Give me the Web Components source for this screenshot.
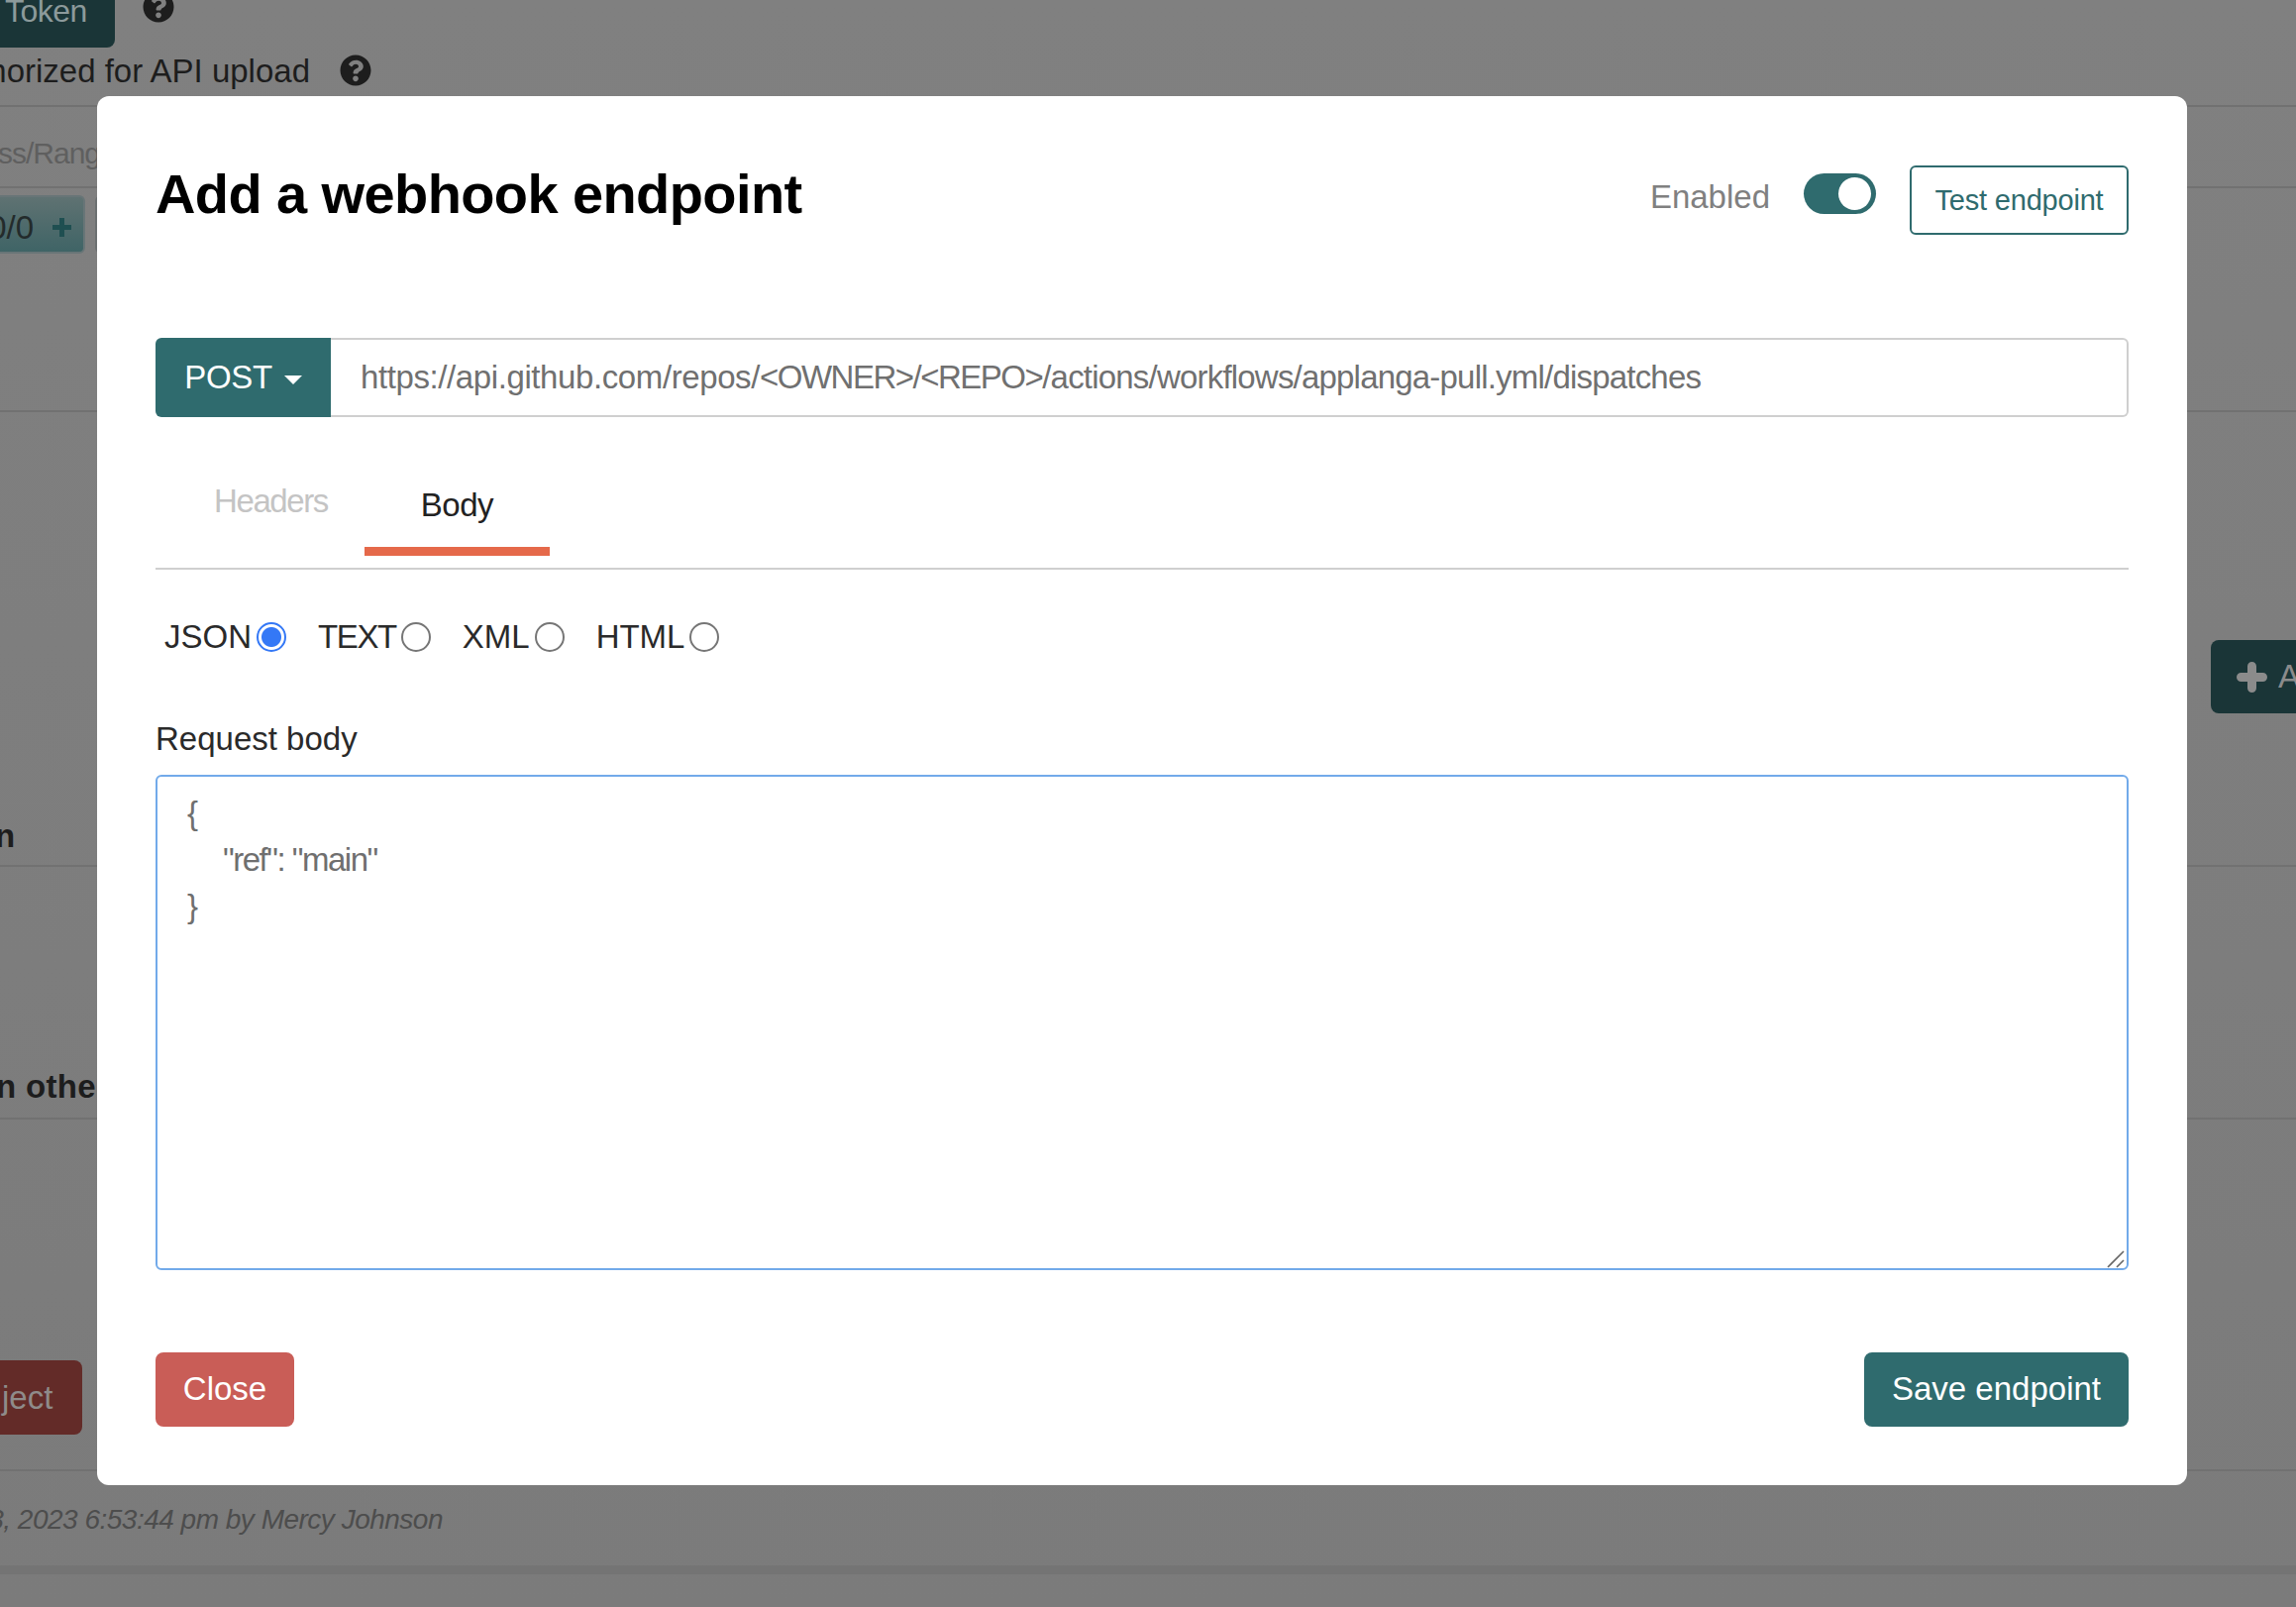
<!doctype html>
<html>
<head>
<meta charset="utf-8">
<style>
  html, body { margin: 0; height: 100%; overflow: hidden; }
  body { font-family: "Liberation Sans", Arial, sans-serif; background: #808080; }
</style>
</head>
<body>
<back-page></back-page>
<webhook-modal>
  <modal-head slot="head"></modal-head>
  <url-bar slot="url" method="POST" url="https://api.github.com/repos/<OWNER>/<REPO>/actions/workflows/applanga-pull.yml/dispatches"></url-bar>
  <tab-strip slot="tabs"></tab-strip>
  <format-radios slot="formats"></format-radios>
  <body-field slot="field"></body-field>
  <action-btn slot="close" kind="close" label="Close"></action-btn>
  <action-btn slot="save" kind="save" label="Save endpoint"></action-btn>
</webhook-modal>

<script>
const helpIcon = `<svg viewBox="0 0 512 512" width="100%" height="100%"><path fill="#1d1d1d" d="M504 256c0 137-111 248-248 248S8 393 8 256 119 8 256 8s248 111 248 248zM263 90c-54 0-89 23-116 63-4 5-3 12 3 16l35 26c5 4 13 3 17-2 18-23 30-36 57-36 20 0 45 13 45 33 0 15-12 23-33 34-23 13-54 30-54 71v6c0 7 5 12 12 12h56c7 0 12-5 12-12v-2c0-29 84-30 84-108 0-58-60-101-118-101zm-7 252c-25 0-46 21-46 46s21 46 46 46 46-21 46-46-21-46-46-46z"/></svg>`;

class BackPage extends HTMLElement {
  constructor() {
    super();
    this.attachShadow({mode: "open"}).innerHTML = `
    <style>
      :host { display: block; height: 1622px; overflow: hidden; color: #1d1d1d; font-size: 33px; background: linear-gradient(#808080, #7b7b7b); }
      .row { display: flex; border-bottom: 2px solid #717171; box-sizing: border-box; overflow: hidden; white-space: nowrap; }
      .r1 { height: 108px; display: block; }
      .tokenline { display: flex; height: 48px; gap: 28px; }
      .token { width: 116px; height: 48px; background: #1a3537; color: #8c9a9b; border-radius: 0 0 8px 0; box-sizing: border-box; padding: 0 0 19px 5px; font-size: 32px; letter-spacing: -0.5px; display: flex; align-items: flex-end; line-height: 36px; }
      .q1 { width: 32px; height: 32px; margin-top: -9px; }
      .authline { display: flex; align-items: center; justify-content: flex-end; width: 375px; height: 48px; gap: 30px; margin-top: -1px; }
      .authline span { margin-top: 2px; }
      .q2 { width: 32px; height: 32px; flex: none; }
      .r2 { height: 82px; color: #5f5f5f; padding-top: 30px; font-size: 30px; letter-spacing: -1px; }
      .r2 span { margin-left: -2px; }
      .r3 { height: 226px; padding-top: 7px; gap: 10px; }
      .count { margin-left: -8px; width: 94px; height: 59px; box-sizing: border-box; border: 2px solid #687577; border-radius: 6px; background: linear-gradient(#5f7272, #3f6466); color: #232b2b; display: flex; align-items: center; justify-content: flex-end; gap: 19px; padding: 6px 12px 0 0; flex: none; }
      .count svg { width: 19px; height: 19px; flex: none; }
      .count2 { width: 60px; height: 59px; box-sizing: border-box; border: 2px solid #6c7071; border-radius: 6px; background: #7a7e7e; flex: none; }
      .r4 { height: 459px; align-items: flex-end; padding-bottom: 10px; font-weight: bold; }
      .r4 span { margin-left: -5px; }
      .r5 { height: 255px; align-items: flex-end; padding-bottom: 12px; font-weight: bold; letter-spacing: 0.3px; }
      .r5 span { margin-left: -4px; }
      .r6 { height: 355px; padding-top: 243px; }
      .reject { width: 83px; height: 75px; box-sizing: border-box; padding-left: 2px; background: #632b28; color: #8f8b8a; border-radius: 0 8px 8px 0; display: flex; align-items: center; }
      .foot { height: 95px; width: 447px; color: #4d4d4d; font-style: italic; font-size: 28px; letter-spacing: -0.5px; display: flex; justify-content: flex-end; padding-top: 33px; box-sizing: border-box; white-space: nowrap; }
      .band { height: 9px; background: #747474; }
      .add { position: absolute; left: 2232px; top: 646px; width: 110px; height: 74px; background: #1a3537; color: #8b8b8b; border-radius: 8px; display: flex; align-items: center; gap: 11px; padding-left: 26px; box-sizing: border-box; }
      .add svg { width: 31px; height: 31px; flex: none; }
    </style>
    <div class="row r1">
      <div class="tokenline"><div class="token"><span>Token</span></div><div class="q1">${helpIcon}</div></div>
      <div class="authline"><span>horized for API upload</span><div class="q2">${helpIcon}</div></div>
    </div>
    <div class="row r2"><span>ss/Rang</span></div>
    <div class="row r3"><div class="count"><span>0/0</span><svg viewBox="0 0 19 19"><path stroke="#1f4f51" stroke-width="5" d="M9.5 0v19M0 9.5h19"/></svg></div><div class="count2"></div></div>
    <div class="row r4"><span>n</span></div>
    <div class="row r5"><span>n other</span></div>
    <div class="row r6"><div class="reject"><span>ject</span></div></div>
    <div class="foot"><span>3, 2023 6:53:44 pm by Mercy Johnson</span></div>
    <div class="band"></div>
    <div class="add"><svg viewBox="0 0 31 31"><path stroke="#8b8b8b" stroke-width="9" stroke-linecap="round" d="M15.5 4.5v22M4.5 15.5h22"/></svg><span>A</span></div>`;
  }
}

class WebhookModal extends HTMLElement {
  constructor() {
    super();
    this.attachShadow({mode: "open"}).innerHTML = `
    <style>
      :host { position: fixed; left: 98px; top: 97px; width: 2110px; height: 1402px; box-sizing: border-box; background: #fff; border-radius: 12px; padding: 70px 59px 59px; display: flex; flex-direction: column; }
      .foot { margin-top: auto; display: flex; justify-content: space-between; }
    </style>
    <slot name="head"></slot>
    <slot name="url"></slot>
    <slot name="tabs"></slot>
    <slot name="formats"></slot>
    <slot name="field"></slot>
    <div class="foot"><slot name="close"></slot><slot name="save"></slot></div>`;
  }
}

class ModalHead extends HTMLElement {
  constructor() {
    super();
    this.attachShadow({mode: "open"}).innerHTML = `
    <style>
      :host { display: flex; align-items: flex-start; height: 174px; }
      h1 { margin: -3px 0 0; font-size: 56px; line-height: 64px; font-weight: bold; color: #000; letter-spacing: -0.6px; flex: 1; white-space: nowrap; }
      .en { color: #808080; font-size: 33px; line-height: 38px; margin-top: 13px; }
      .toggle { width: 73px; height: 41px; border-radius: 21px; background: #2f6b6e; margin: 8px 34px 0 34px; padding: 4px 5px; box-sizing: border-box; display: flex; justify-content: flex-end; }
      .toggle i { display: block; width: 33px; height: 33px; border-radius: 50%; background: #fff; }
      .test { width: 221px; height: 70px; box-sizing: border-box; border: 2px solid #2f6b6e; border-radius: 6px; background: #fff; color: #2f6b6e; font: 29px "Liberation Sans", Arial, sans-serif; letter-spacing: -0.2px; padding: 0; }
    </style>
    <h1>Add a webhook endpoint</h1>
    <span class="en">Enabled</span>
    <div class="toggle"><i></i></div>
    <button class="test">Test endpoint</button>`;
  }
}

class UrlBar extends HTMLElement {
  constructor() {
    super();
    this.attachShadow({mode: "open"}).innerHTML = `
    <style>
      :host { display: flex; height: 80px; }
      .method { width: 177px; box-sizing: border-box; background: #2f6b6e; color: #fff; border-radius: 6px 0 0 6px; display: flex; align-items: center; justify-content: center; gap: 12px; font-size: 33px; letter-spacing: -0.3px; }
      .caret { width: 0; height: 0; border-left: 9px solid transparent; border-right: 9px solid transparent; border-top: 9px solid #fff; margin-top: 4px; }
      .url { flex: 1; box-sizing: border-box; border: 2px solid #cfcfcf; border-left: 0; border-radius: 0 6px 6px 0; padding-left: 30px; display: flex; align-items: center; color: #707070; font-size: 33px; letter-spacing: -0.8px; white-space: nowrap; }
      .a { letter-spacing: -0.4px; }
      .b { letter-spacing: -1.5px; }
    </style>
    <div class="method"><span class="m"></span><span class="caret"></span></div>
    <div class="url"><div><span class="a"></span><span class="b"></span><span class="c"></span></div></div>`;
    const root = this.shadowRoot;
    root.querySelector(".m").textContent = this.getAttribute("method");
    // the placeholders are set tighter than the rest of the address
    const parts = this.getAttribute("url").match(/^(.*?)(<.*>)(.*)$/);
    root.querySelector(".a").textContent = parts[1];
    root.querySelector(".b").textContent = parts[2];
    root.querySelector(".c").textContent = parts[3];
  }
}

class TabStrip extends HTMLElement {
  constructor() {
    super();
    this.attachShadow({mode: "open"}).innerHTML = `
    <style>
      :host { display: flex; height: 154px; box-sizing: border-box; border-bottom: 2px solid #cfcfcf; font-size: 33px; align-items: flex-start; padding-top: 66px; }
      .off { color: #c4c4c4; margin-left: 59px; line-height: 38px; letter-spacing: -1.4px; }
      .on { color: #222; width: 187px; margin-left: 37px; height: 61px; text-align: center; line-height: 38px; padding-top: 4px; border-bottom: 9px solid #e5694a; letter-spacing: -0.5px; }
    </style>
    <span class="off">Headers</span><span class="on">Body</span>`;
  }
}

class FormatRadios extends HTMLElement {
  constructor() {
    super();
    this.attachShadow({mode: "open"}).innerHTML = `
    <style>
      :host { display: flex; padding: 53px 0 0 9px; height: 99px; box-sizing: border-box; font-size: 33px; color: #2a2a2a; }
      label { display: flex; align-items: center; height: 30px; margin-right: 32px; white-space: nowrap; }
      .tight { letter-spacing: -1.4px; }
      i { display: block; width: 30px; height: 30px; box-sizing: border-box; border-radius: 50%; border: 2px solid #767676; margin-left: 5px; background: #fff; }
      i.on { border-color: #3478f6; background: radial-gradient(circle, #3478f6 0 9.5px, #fff 10.5px); }
    </style>
    <label>JSON<i class="on"></i></label>
    <label><span class="tight">TEXT</span><i></i></label>
    <label>XML<i></i></label>
    <label>HTML<i></i></label>`;
  }
}

class BodyField extends HTMLElement {
  constructor() {
    super();
    this.attachShadow({mode: "open"}).innerHTML = `
    <style>
      :host { display: block; }
      .lab { display: block; font-size: 33px; line-height: 38px; color: #2a2a2a; margin: 53px 0 17px; }
      .box { position: relative; height: 500px; box-sizing: border-box; border: 2px solid #72aaea; border-radius: 6px; padding: 13px 30px; color: #6f6f6f; font-size: 33px; line-height: 47px; letter-spacing: -1.5px; }
      .box div { white-space: pre; }
      .in { padding-left: 36px; }
      .grip { position: absolute; right: 1px; bottom: 1px; width: 18px; height: 18px; overflow: visible; }
    </style>
    <span class="lab">Request body</span>
    <div class="box"><div>{</div><div class="in">"ref": "main"</div><div>}</div><svg class="grip" viewBox="0 0 18 18"><path d="M0 18 16 2M9 18l7-7" stroke="#666" stroke-width="1.6" fill="none"/></svg></div>`;
  }
}

class ActionBtn extends HTMLElement {
  constructor() {
    super();
    const kind = this.getAttribute("kind");
    this.attachShadow({mode: "open"}).innerHTML = `
    <style>
      :host { display: block; }
      button { height: 75px; box-sizing: border-box; border: 0; border-radius: 8px; color: #fff; font: 33px "Liberation Sans", Arial, sans-serif; padding: 0 0 2px; }
      .close { width: 140px; background: #c95d57; }
      .save { width: 267px; background: #2f6b6e; }
    </style>
    <button class="${kind}">${this.getAttribute("label")}</button>`;
  }
}

customElements.define("back-page", BackPage);
customElements.define("webhook-modal", WebhookModal);
customElements.define("modal-head", ModalHead);
customElements.define("url-bar", UrlBar);
customElements.define("tab-strip", TabStrip);
customElements.define("format-radios", FormatRadios);
customElements.define("body-field", BodyField);
customElements.define("action-btn", ActionBtn);
</script>
</body>
</html>
